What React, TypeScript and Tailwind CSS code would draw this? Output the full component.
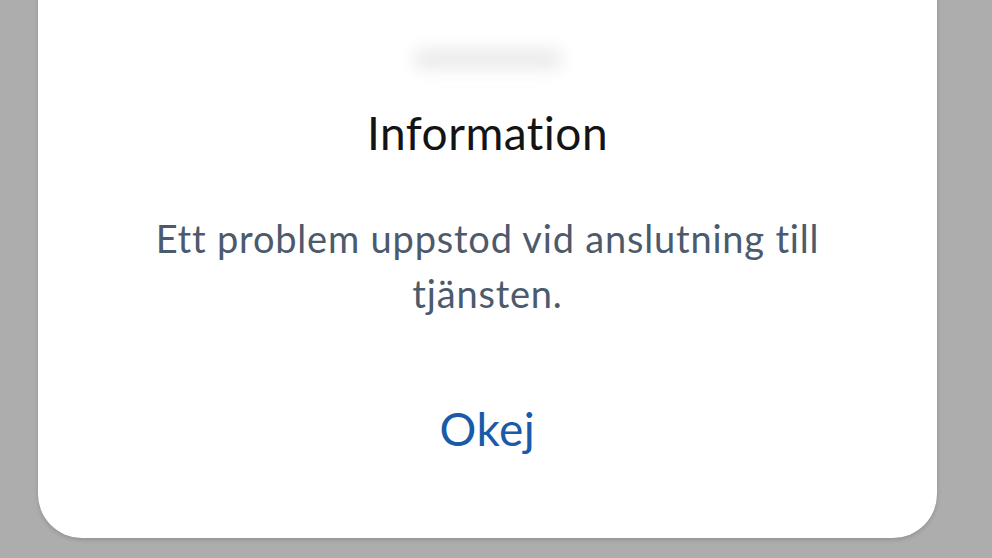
import React from "react";

// Connection error dialog: white sheet over a dimmed backdrop.

export default function App() {
  return (
    <div
      className="w-[992px] h-[558px] overflow-hidden bg-[#adadad] flex"
      style={{ fontFamily: "Lato, 'Open Sans', sans-serif" }}
    >
      <div className="ml-[38px] w-[899px] h-[578px] -mt-[40px] bg-white rounded-b-[44px] shadow-[0_2px_4px_rgba(0,0,0,0.15)] flex flex-col items-center">
        <div className="mt-[88px] h-[22px] w-[150px] rounded-full bg-[#ececec] blur-[8px]" />
        <h1 className="mt-[35px] text-[46px] leading-[56px] tracking-[0.5px] text-[#141414] font-normal">
          Information
        </h1>
        <p className="mt-[50px] w-[760px] text-center text-[38px] leading-[55px] tracking-[0.8px] text-[#4b5a6d]">
          Ett problem uppstod vid anslutning till tjänsten.
        </p>
        <button className="mt-[80px] text-[46px] leading-[56px] tracking-[0.5px] text-[#1a5ba8]">
          Okej
        </button>
      </div>
    </div>
  );
}
